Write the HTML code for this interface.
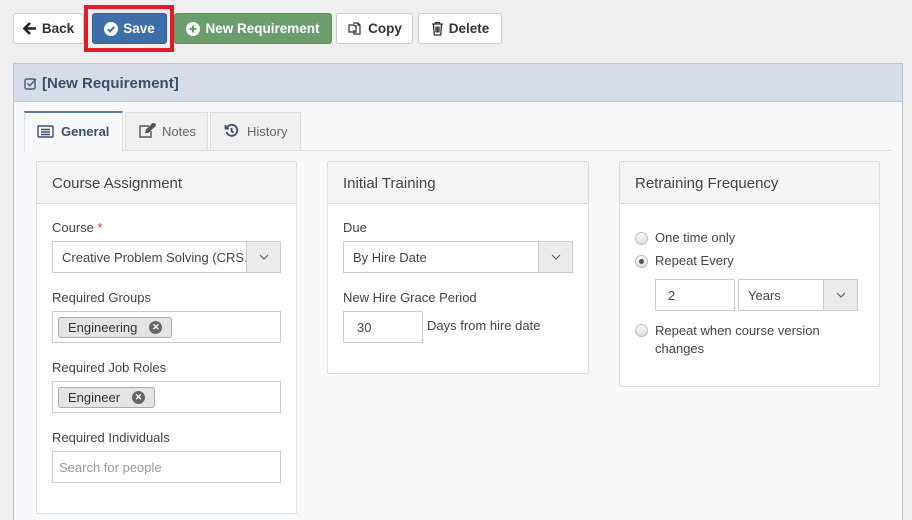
<!DOCTYPE html>
<html style="overflow:hidden;height:520px"><head><style>
*{box-sizing:border-box;margin:0;padding:0}
body{width:912px;height:520px;overflow:hidden;background:#efefef;font-family:"Liberation Sans",sans-serif;font-size:13px;color:#333;position:relative}
.a{position:absolute}
.btn{position:absolute;top:13px;height:31px;border:1px solid #ccc;border-radius:3px;background:#fff;font-weight:bold;font-size:13.5px;color:#333;display:flex;align-items:center;justify-content:center;gap:5px}
.card{position:absolute;background:#fff;border:1px solid #ddd;border-radius:2px}
.card .h{height:42px;background:#f4f4f4;border-bottom:1px solid #ddd;padding:13px 15px;font-size:15px;color:#444}
.lbl{position:absolute;font-size:13px;color:#444}
.inp{position:absolute;height:32px;border:1px solid #ccc;background:#fff;padding:8px 9px;font-size:13px;color:#444}
.arr{position:absolute;top:-1px;right:-1px;width:35px;height:32px;background:#ebebeb;border:1px solid #ccc;display:flex;align-items:center;justify-content:center}
.tag{position:absolute;top:5px;left:5px;height:21px;border:1px solid #aaa;border-radius:3px;background:#e4e4e4;padding:2px 9px;font-size:13px;color:#333;display:flex;align-items:center;gap:12px}
.x{width:13px;height:13px;border-radius:50%;background:#666;color:#fff;font-size:9px;line-height:13px;text-align:center;font-weight:bold}
.rad{position:absolute;width:13px;height:13px;border-radius:50%;border:1px solid #bbb;background:linear-gradient(#fafafa,#ddd)}
</style></head><body>
<div class="btn" style="left:13px;width:71px">
<svg width="14" height="13" viewBox="0 0 14 13"><path d="M7 1 1.5 6.5 7 12M2 6.5h11" stroke="#222" stroke-width="2.6" fill="none"/></svg>Back</div>
<div class="a" style="left:84px;top:5px;width:90px;height:47px;border:4px solid #e51b24"></div>
<div class="btn" style="left:92px;width:75px;background:#3e6fa8;border-color:#335f92;color:#fff">
<svg width="14" height="14" viewBox="0 0 14 14"><circle cx="7" cy="7" r="7" fill="#fff"/><path d="M3.8 7.2 6 9.3 10.2 5" stroke="#3e6fa8" stroke-width="2" fill="none"/></svg>Save</div>
<div class="btn" style="left:174px;width:158px;background:#6b9e6c;border-color:#5f8f60;color:#fff">
<svg width="14" height="14" viewBox="0 0 14 14"><circle cx="7" cy="7" r="7" fill="#fff"/><path d="M7 3.5v7M3.5 7h7" stroke="#6b9e6c" stroke-width="2.2"/></svg>New Requirement</div>
<div class="btn" style="left:336px;width:77px">
<svg width="16" height="16" viewBox="0 0 16 16" fill="none" stroke="#333" stroke-width="1.2"><path d="M2 4h5l2 2v5H2z"/><path d="M6 2h5l2 2v9H7v-4"/><path d="M9 6V4M11 2v2h2"/></svg>Copy</div>
<div class="btn" style="left:418px;width:84px">
<svg width="13" height="15" viewBox="0 0 13 15" fill="none" stroke="#333" stroke-width="1.3"><path d="M1 3h11M4.5 3V1.5h4V3M2.5 3l.8 11h6.4l.8-11M5 5.5v6M6.5 5.5v6M8 5.5v6"/></svg>Delete</div>

<div class="a" style="left:13px;top:63px;width:890px;height:470px;border:1px solid #b7c3d1;background:#f7f8fa"></div>
<div class="a" style="left:14px;top:64px;width:888px;height:38px;background:#d6dde6;border-bottom:1px solid #c0cad6"></div>
<svg class="a" style="left:24px;top:77px" width="13" height="13" viewBox="0 0 13 13" fill="none" stroke="#4a5c74" stroke-width="1.4"><rect x="1" y="2" width="10" height="10" rx="1.5"/><path d="M3.5 6.5l2.2 2.2L12 2"/></svg>
<div class="a" style="left:42px;top:75px;font-size:15px;font-weight:bold;color:#3b4e6e">[New Requirement]</div>

<div class="a" style="left:24px;top:150px;width:868px;height:1px;background:#ddd"></div>
<div class="a" style="left:24px;top:111px;width:99px;height:41px;background:#f7f8fa;border:1px solid #ddd;border-top:2px solid #5a7ea6;border-bottom:none"></div>
<svg class="a" style="left:37px;top:125px" width="17" height="13" viewBox="0 0 17 13" fill="none" stroke="#3b4e6e" stroke-width="1.4"><rect x="1" y="1" width="15" height="11" rx="1"/><path d="M4 4.5h9M4 7h9M4 9.5h9"/></svg>
<div class="a" style="left:61px;top:124px;font-weight:bold;color:#3b4e6e">General</div>
<div class="a" style="left:125px;top:112px;width:83px;height:38px;background:#f0f0f0;border:1px solid #ddd;border-bottom:none"></div>
<svg class="a" style="left:138px;top:123px" width="18" height="15" viewBox="0 0 18 15" fill="none" stroke="#555" stroke-width="1.4"><path d="M11 3H2v11h11V8"/><path d="M8 9.5l.5-2.5 7-7 2 2-7 7z" fill="#555"/></svg>
<div class="a" style="left:162px;top:124px;color:#666">Notes</div>
<div class="a" style="left:210px;top:112px;width:91px;height:38px;background:#f0f0f0;border:1px solid #ddd;border-bottom:none"></div>
<svg class="a" style="left:224px;top:123px" width="15" height="15" viewBox="0 0 15 15" fill="none" stroke="#3b4e6e" stroke-width="1.8"><path d="M3 4.5A5.5 5.5 0 1 1 2.5 9"/><path d="M1.5 2v3.5H5" /><path d="M7.5 5v3l2 1.5"/></svg>
<div class="a" style="left:247px;top:124px;color:#666">History</div>

<div class="card" style="left:36px;top:161px;width:261px;height:353px"><div class="h">Course Assignment</div></div>
<div class="lbl" style="left:52px;top:220px">Course <span style="color:#e33">*</span></div>
<div class="inp" style="left:52px;top:241px;width:229px">Creative Problem Solving (CRS.<div class="arr"><svg width="10" height="6"><path d="M1 1l4 4 4-4" stroke="#555" fill="none"/></svg></div></div>
<div class="lbl" style="left:52px;top:290px">Required Groups</div>
<div class="inp" style="left:52px;top:311px;width:229px"><div class="tag">Engineering<span class="x">✕</span></div></div>
<div class="lbl" style="left:52px;top:360px">Required Job Roles</div>
<div class="inp" style="left:52px;top:381px;width:229px"><div class="tag">Engineer<span class="x">✕</span></div></div>
<div class="lbl" style="left:52px;top:430px">Required Individuals</div>
<div class="inp" style="left:52px;top:451px;width:229px;padding-left:6px;color:#999">Search for people</div>

<div class="card" style="left:327px;top:161px;width:262px;height:213px"><div class="h">Initial Training</div></div>
<div class="lbl" style="left:343px;top:220px">Due</div>
<div class="inp" style="left:343px;top:241px;width:230px">By Hire Date<div class="arr"><svg width="10" height="6"><path d="M1 1l4 4 4-4" stroke="#555" fill="none"/></svg></div></div>
<div class="lbl" style="left:343px;top:290px">New Hire Grace Period</div>
<div class="inp" style="left:343px;top:311px;width:80px;padding-left:13px">30</div>
<div class="lbl" style="left:427px;top:318px">Days from hire date</div>

<div class="card" style="left:619px;top:161px;width:261px;height:226px"><div class="h">Retraining Frequency</div></div>
<div class="rad" style="left:635px;top:232px"></div>
<div class="lbl" style="left:655px;top:230px">One time only</div>
<div class="rad" style="left:635px;top:255px"><div class="a" style="left:3px;top:3px;width:5px;height:5px;border-radius:50%;background:#555"></div></div>
<div class="lbl" style="left:655px;top:253px">Repeat Every</div>
<div class="inp" style="left:655px;top:279px;width:80px;padding-left:12px">2</div>
<div class="inp" style="left:738px;top:279px;width:120px">Years<div class="arr"><svg width="10" height="6"><path d="M1 1l4 4 4-4" stroke="#555" fill="none"/></svg></div></div>
<div class="rad" style="left:635px;top:324px"></div>
<div class="lbl" style="left:655px;top:322px;line-height:18px">Repeat when course version<br>changes</div>
</body></html>
